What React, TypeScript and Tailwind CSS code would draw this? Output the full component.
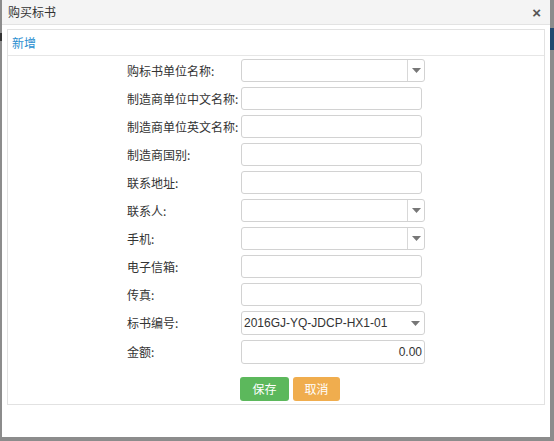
const font = { fontFamily: '"Noto Sans CJK SC", "Liberation Sans", sans-serif' };

type Row = { label: string; kind: "text" | "combo" | "select" | "amount"; value?: string };

const rows: Row[] = [
  { label: "购标书单位名称:", kind: "combo" },
  { label: "制造商单位中文名称:", kind: "text" },
  { label: "制造商单位英文名称:", kind: "text" },
  { label: "制造商国别:", kind: "text" },
  { label: "联系地址:", kind: "text" },
  { label: "联系人:", kind: "combo" },
  { label: "手机:", kind: "combo" },
  { label: "电子信箱:", kind: "text" },
  { label: "传真:", kind: "text" },
  { label: "标书编号:", kind: "select", value: "2016GJ-YQ-JDCP-HX1-01" },
  { label: "金额:", kind: "amount", value: "0.00" },
];

function Caret() {
  return (
    <svg width="9" height="5" viewBox="0 0 9 5">
      <path d="M0 0h9L4.5 5z" fill="#777" />
    </svg>
  );
}

function Field({ row }: { row: Row }) {
  if (row.kind === "text") {
    return <div className="h-[23px] w-[181px] rounded-[3px] border border-[#d2d2d2] bg-white" />;
  }
  if (row.kind === "amount") {
    return (
      <div
        className="flex h-[24px] w-[184px] items-center justify-end rounded-[3px] border border-[#d2d2d2] bg-white pr-[2px] text-[12px] text-[#333]"
        style={{ fontFamily: '"Liberation Sans", Arial, sans-serif' }}
      >
        {row.value}
      </div>
    );
  }
  if (row.kind === "select") {
    return (
      <div
        className="flex h-[24px] w-[184px] items-center rounded-[3px] border border-[#d2d2d2] bg-white pl-[2px] text-[12px] text-[#333]"
        style={{ fontFamily: '"Liberation Sans", Arial, sans-serif' }}
      >
        <span className="flex-1">{row.value}</span>
        <span className="flex w-[17px] items-center justify-center">
          <Caret />
        </span>
      </div>
    );
  }
  return (
    <div className="flex h-[23px] w-[184px] rounded-[3px] border border-[#d2d2d2] bg-white">
      <div className="flex-1" />
      <div className="flex w-[17px] items-center justify-center border-l border-[#d8d8d8]">
        <Caret />
      </div>
    </div>
  );
}

export default function App() {
  return (
    <div className="relative h-[441px] w-[554px] overflow-hidden bg-[#8c8c8c]" style={font}>
      <div className="absolute right-0 top-[28px] h-[22px] w-[4px] bg-[#234a70]" />
      <div className="absolute left-0 top-[33px] h-[8px] w-[2px] bg-[#333]" />

      <div className="ml-[2px] flex h-[437px] w-[548px] flex-col bg-white">
        <div className="flex h-[25px] items-center justify-between border-b border-[#e3e3e3] bg-[#f4f4f4] pl-[6px] pr-[9px]">
          <span className="text-[12px] text-[#333]">购买标书</span>
          <span className="text-[15px] font-bold leading-none text-[#555]" style={{ fontFamily: '"Liberation Sans", sans-serif' }}>
            ×
          </span>
        </div>

        <div className="mx-[5px] mt-[4px] border border-[#e2e2e2]">
          <div className="flex h-[26px] items-center border-b border-[#e6e6e6] pl-[4px] text-[12px] text-[#2a8ed0]">
            新增
          </div>

          <div className="flex flex-col gap-[5px] pl-[119px] pt-[3px]">
            {rows.map((row) => (
              <div key={row.label} className="flex items-center">
                <span className="w-[114px] text-[12px] text-[#333]">{row.label}</span>
                <Field row={row} />
              </div>
            ))}
          </div>

          <div className="mb-[3px] mt-[13px] flex gap-[4px] pl-[232px]">
            <button className="h-[24px] w-[49px] rounded-[3px] bg-[#5cb85c] text-[12px] text-white">保存</button>
            <button className="h-[24px] w-[47px] rounded-[3px] bg-[#f0ad4e] text-[12px] text-white">取消</button>
          </div>
        </div>
      </div>
    </div>
  );
}
